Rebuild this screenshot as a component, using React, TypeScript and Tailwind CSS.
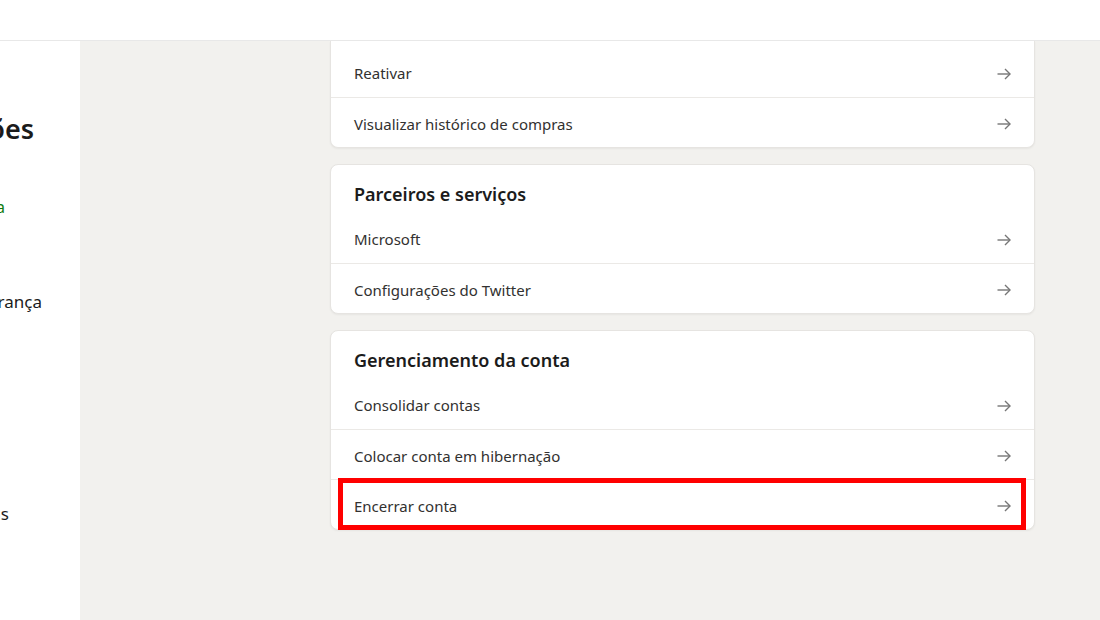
const font = { fontFamily: '"Noto Sans", "Open Sans", Arial, sans-serif' };

const Arrow = () => (
  <svg width="14" height="12" viewBox="0 0 14 12" fill="none" stroke="#767676" strokeWidth="1.4">
    <path d="M0.5 6h12.5" />
    <path d="M8 1l5 5-5 5" />
  </svg>
);

const Row = ({ label, first }: { label: string; first?: boolean }) => (
  <div
    className={`h-[50px] flex items-center justify-between pl-[23px] pr-[23px] pt-[3px] ${
      first ? "" : "border-t border-[#ebe9e6]"
    }`}
  >
    <span className="text-[15px] text-[#323130]">{label}</span>
    <Arrow />
  </div>
);

const Card = ({ title, items, top }: { title?: string; items: string[]; top?: boolean }) => (
  <div
    className={`bg-white border border-[#e6e4e1] shadow-[0_1px_2px_rgba(0,0,0,0.05)] ${
      top ? "rounded-b-lg border-t-0 pt-[6px]" : "rounded-lg"
    }`}
  >
    {title && (
      <div className="pl-[23px] pt-[15px] pb-[5px] text-[18px] leading-7 font-semibold text-[#1b1b1b]">
        {title}
      </div>
    )}
    {items.map((it, i) => (
      <Row key={it} label={it} first={i === 0} />
    ))}
  </div>
);

const SideLine = ({ text, right, className }: { text: string; right: number; className: string }) => (
  <div className="flex justify-end" style={{ paddingRight: right }}>
    <span className={`whitespace-nowrap ${className}`}>{text}</span>
  </div>
);

export default function App() {
  return (
    <div className="w-[1100px] h-[620px] overflow-hidden bg-white" style={font}>
      <div className="h-[41px] bg-white border-b border-[#e8e8e8]" />
      <div className="flex h-[579px]">
        <div className="w-[80px] shrink-0 bg-white overflow-hidden">
          <div className="mt-[68px]">
            <SideLine text="Configurações" right={46} className="text-[27px] leading-10 font-semibold text-[#1b1b1b]" />
          </div>
          <div className="mt-[46px]">
            <SideLine text="Minha conta" right={75} className="text-[16px] leading-6 text-[#107c10]" />
          </div>
          <div className="mt-[71px]">
            <SideLine text="Privacidade e segurança" right={38} className="text-[17px] leading-6 text-[#1b1b1b]" />
          </div>
          <div className="mt-[188px]">
            <SideLine text="Assinaturas" right={71} className="text-[17px] leading-6 text-[#1b1b1b]" />
          </div>
        </div>
        <div className="flex-1 bg-[#f2f1ee] relative">
          <div className="ml-[250px] w-[705px] flex flex-col gap-[16px]">
            <Card top items={["Reativar", "Visualizar histórico de compras"]} />
            <Card title="Parceiros e serviços" items={["Microsoft", "Configurações do Twitter"]} />
            <Card
              title="Gerenciamento da conta"
              items={["Consolidar contas", "Colocar conta em hibernação", "Encerrar conta"]}
            />
          </div>
          <div className="absolute left-[258px] top-[437px] w-[688px] h-[52px] border-[5px] border-[#ff0000]" />
        </div>
      </div>
    </div>
  );
}
